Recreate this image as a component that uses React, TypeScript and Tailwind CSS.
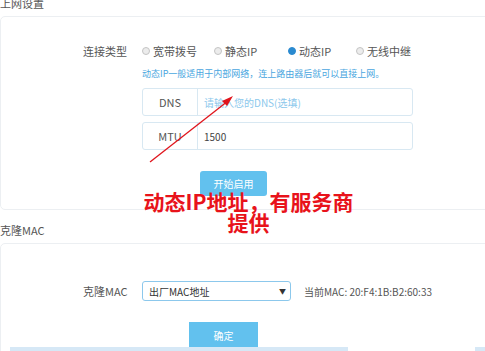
import React from "react";

const font = { fontFamily: '"Noto Sans CJK SC", "Noto Sans", sans-serif' };

function Radio({ label, checked, width }: { label: string; checked?: boolean; width: string }) {
  return (
    <div className={`flex items-center gap-[3px] ${width}`}>
      <span
        className={`inline-block w-[8px] h-[8px] rounded-full border ${
          checked ? "border-[#2a8ad0] bg-[#2a8ad0]" : "border-[#c4c4c4] bg-[#ececec]"
        }`}
      />
      <span className="text-[11px] text-[#555]">{label}</span>
    </div>
  );
}

function InputGroup({ label, value, placeholder }: { label: string; value?: string; placeholder?: string }) {
  return (
    <div className="flex w-[271px] h-[28px] border border-[#d8e8f2] rounded-[3px] text-[11px]">
      <div className="w-[55px] flex items-center justify-center border-r border-[#d8e8f2] text-[#555]">{label}</div>
      <div className="flex-1 flex items-center pl-[6px]">
        {value ? <span className="text-[#444] text-[10px]">{value}</span> : <span className="text-[#8cc8ec] text-[10px]">{placeholder}</span>}
      </div>
    </div>
  );
}

export default function App() {
  return (
    <div className="relative w-[485px] h-[351px] overflow-hidden bg-white" style={font}>
      {/* 上网设置 */}
      <div className="text-[11px] text-[#555] leading-[14px] mt-[-4px]">上网设置</div>
      <div className="mt-[6px] w-[520px] h-[194px] border border-[#eceff2] rounded-[5px] pt-[26px]">
        <div className="flex items-center h-[16px]">
          <div className="w-[141px] pl-[82px] text-[11px] text-[#555]">连接类型</div>
          <Radio label="宽带拨号" width="w-[72px]" />
          <Radio label="静态IP" width="w-[74px]" />
          <Radio label="动态IP" checked width="w-[68px]" />
          <Radio label="无线中继" width="w-[70px]" />
        </div>
        <div className="ml-[141px] mt-[9px] text-[9px] leading-[12px] text-[#4aa6e0]">
          动态IP一般适用于内部网络，连上路由器后就可以直接上网。
        </div>
        <div className="ml-[141px] mt-[8px] flex flex-col gap-[6px]">
          <InputGroup label="DNS" placeholder="请输入您的DNS(选填)" />
          <InputGroup label="MTU" value="1500" />
        </div>
        <div className="ml-[199px] mt-[21px] w-[67px] h-[25px] bg-[#62c1ee] rounded-[3px] flex items-center justify-center text-white text-[10px]">
          开始启用
        </div>
      </div>

      {/* 克隆MAC */}
      <div className="mt-[13px] text-[11px] text-[#555] leading-[14px]">克隆MAC</div>
      <div className="mt-[6px] w-[520px] h-[120px] border border-[#eceff2] rounded-[5px] pt-[37px]">
        <div className="flex items-center h-[20px]">
          <div className="w-[141px] pl-[82px] text-[11px] text-[#555]">克隆MAC</div>
          <div className="w-[149px] h-[20px] border border-[#8cc8ec] rounded-[3px] flex items-center justify-between pl-[6px] pr-[4px]">
            <span className="text-[10px] text-[#333]">出厂MAC地址</span>
            <span className="text-[7px] text-[#333]">▼</span>
          </div>
          <div className="ml-[13px] text-[10px] text-[#555]">当前MAC: 20:F4:1B:B2:60:33</div>
        </div>
        <div className="ml-[188px] mt-[21px] w-[69px] h-[26px] bg-[#62c1ee] flex items-center justify-center text-white text-[10px]">
          确定
        </div>
      </div>
      <div className="absolute left-[10px] top-[347px] w-[338px] h-[4px] bg-[#d6e8f6]" />
      <div className="absolute left-[475px] top-[347px] w-[10px] h-[4px] bg-[#d6e8f6]" />

      {/* annotation arrow */}
      <svg className="absolute left-0 top-0" width="485" height="351">
        <line x1="150" y1="162" x2="228" y2="101" stroke="#e0141c" strokeWidth="1.3" />
        <polygon points="233,96 222,101 227,106" fill="#e0141c" />
      </svg>

      {/* annotation text */}
      <div className="absolute left-[135px] top-[191px] w-[227px] text-center whitespace-nowrap text-[#e8131b] font-bold text-[21px] leading-[21px]">
        <div>动态IP地址，有服务商</div>
        <div>提供</div>
      </div>
    </div>
  );
}
